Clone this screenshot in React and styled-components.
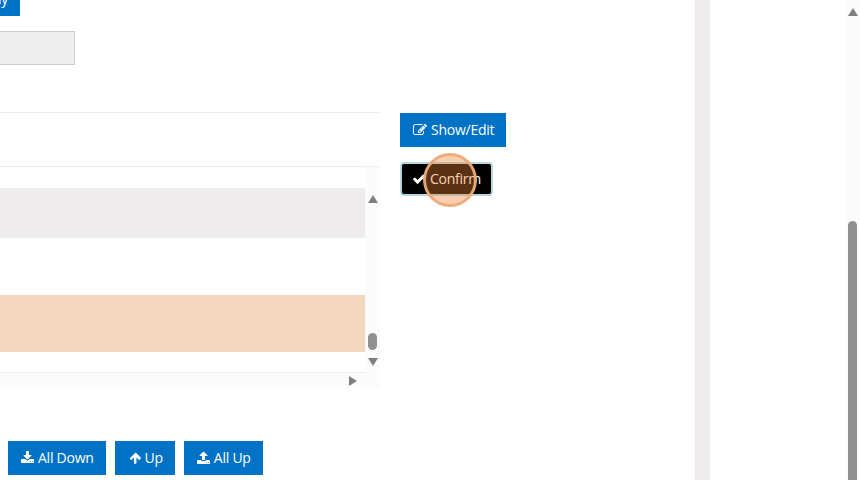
import React from 'react';
import styled, { createGlobalStyle } from 'styled-components';

const Global = createGlobalStyle`
  html, body { margin: 0; padding: 0; background: #fff; overflow: hidden; }
  * { box-sizing: border-box; }
`;
const Page = styled.div`
  width: 860px; height: 480px; display: flex; overflow: hidden; position: relative;
  font-family: "Open Sans", "Liberation Sans", sans-serif; font-size: 14px; background: #fff;
`;
const Main = styled.main`
  width: 695px; height: 480px; flex: none; display: flex; flex-direction: column; overflow: hidden;
`;
const Gutter = styled.div`width: 15px; flex: none; background: #eeeced;`;
const Side = styled.aside`flex: 1; background: #fff;`;
const PageScroll = styled.div`
  width: 15px; flex: none; background: #fbfbfb; position: relative;
`;
const Button = styled.button`
  height: 34px; padding: 0 12px 0 13px; border: 0; border-radius: 0; background: #0072c6; color: #fff;
  font: 14px/20px "Open Sans", "Liberation Sans", sans-serif; letter-spacing: -0.25px;
  display: inline-flex; align-items: center; gap: 4px;
  flex: none; white-space: nowrap;
  svg { flex: none; }
`;
const ApplyButton = styled(Button)`
  align-self: flex-start; width: 70px; margin: -18px 0 0 -50px; justify-content: flex-end; overflow: hidden;
`;
const Field = styled.div`
  width: 175px; height: 34px; margin: 15px 0 0 -100px; background: #eee; border: 1px solid #ccc;
`;
const Panel = styled.section`
  display: flex; margin-top: 47px; align-items: flex-start;
`;
const TableBox = styled.div`width: 380px; flex: none; display: flex; flex-direction: column;`;
const Head = styled.div`
  height: 55px; border-top: 1px solid #eee; border-bottom: 1px solid #eeeeee;
`;
const ScrollRow = styled.div`
  display: flex; height: 206px;
`;
const Body = styled.div`
  width: 365px; flex: none; padding-top: 21px; border-bottom: 1px solid #eee;
  height: 206px;
`;
const Row = styled.div`
  height: ${p => p.$h}px; background: ${p => p.$bg};
`;
const VBar = styled.div`
  width: 15px; flex: none; background: #fbfbfb; position: relative;
`;
const Thumb = styled.div`
  position: absolute; left: 3px; width: 9px; border-radius: 4.5px; background: #8f8f8f;
  top: ${p => p.$top}px; height: ${p => p.$h}px;
`;
const Arrow = styled.div`
  position: absolute; width: 0; height: 0;
  left: ${p => p.$left}px; top: ${p => p.$top}px;
  border-left: 5px solid transparent; border-right: 5px solid transparent;
  ${p => p.$down ? 'border-top: 8px solid #7f7f7f;' : 'border-bottom: 8px solid #7f7f7f;'}
`;
const HBar = styled.div`
  height: 15px; background: #fbfbfb; position: relative;
`;
const RightArrow = styled.div`
  position: absolute; left: 349px; top: 3px; width: 0; height: 0;
  border-top: 5px solid transparent; border-bottom: 5px solid transparent; border-left: 8px solid #7f7f7f;
`;
const Actions = styled.div`
  padding: 1px 0 0 20px; display: flex; flex-direction: column; align-items: flex-start; gap: 15px;
`;
const ConfirmButton = styled(Button)`
  background: #000; border: 2px solid #b5d8e0; border-radius: 4px; padding: 0 10px 0 10px; position: relative;
`;
const Pulse = styled.span`
  position: absolute; left: 21px; top: -11px; width: 54px; height: 54px; border-radius: 50%;
  background: rgba(240, 130, 50, .38); border: 3px solid rgba(238, 170, 120, .95);
  pointer-events: none;
`;
const Transfer = styled.div`
  display: flex; gap: 9px; margin: 53px 0 0 8px;
`;

const Ico = styled.svg`width: ${p => p.$w || 14}px; height: 14px; fill: currentColor;`;
const EditIcon = () => (
  <Ico viewBox="0 0 1792 1792" $w={14}><path d="M888 1184l116-116-152-152-116 116v56h96v96h56zm440-720q-16-16-33 1l-350 350q-17 17-1 33t33-1l350-350q17-17 1-33zm80 594v190q0 119-84.500 203.500t-203.500 84.500h-832q-119 0-203.500-84.500t-84.500-203.500v-832q0-119 84.500-203.500t203.500-84.500h832q63 0 117 25 15 7 18 23 3 17-9 29l-49 49q-14 14-32 8-23-6-45-6h-832q-66 0-113 47t-47 113v832q0 66 47 113t113 47h832q66 0 113-47t47-113v-126q0-13 9-22l64-64q15-15 35-7t20 29zm-96-738l288 288-672 672h-288v-288zm444 132l-92 92-288-288 92-92q28-28 68-28t68 28l152 152q28 28 28 68t-28 68z"/></Ico>
);
const CheckIcon = () => (
  <Ico viewBox="0 0 1792 1792"><path d="M1671 566q0 40-28 68l-724 724-136 136q-28 28-68 28t-68-28l-136-136-362-362q-28-28-28-68t28-68l136-136q28-28 68-28t68 28l294 295 656-657q28-28 68-28t68 28l136 136q28 28 28 68z"/></Ico>
);
const DownloadIcon = () => (
  <Ico viewBox="0 0 1664 1792" $w={13}><path d="M1280 1344q0-26-19-45t-45-19-45 19-19 45 19 45 45 19 45-19 19-45zm256 0q0-26-19-45t-45-19-45 19-19 45 19 45 45 19 45-19 19-45zm128-224v320q0 40-28 68t-68 28h-1472q-40 0-68-28t-28-68v-320q0-40 28-68t68-28h465l135 136q58 56 136 56t136-56l136-136h464q40 0 68 28t28 68zm-325-569q17 41-14 70l-448 448q-18 19-45 19t-45-19l-448-448q-31-29-14-70 17-39 59-39h256v-448q0-26 19-45t45-19h256q26 0 45 19t19 45v448h256q42 0 59 39z"/></Ico>
);
const ArrowUpIcon = () => (
  <Ico viewBox="0 0 1664 1792" $w={13}><path d="M1611 971q0 39-27 66l-75 75q-28 28-68 28-41 0-67-28l-294-293v704q0 40-28 68t-68 28h-128q-40 0-68-28t-28-68v-704l-294 293q-26 28-67 28t-67-28l-75-75q-28-28-28-66 0-39 28-67l651-652q27-27 67-27 39 0 68 27l651 652q28 28 28 67z"/></Ico>
);
const UploadIcon = () => (
  <Ico viewBox="0 0 1664 1792" $w={13}><path d="M1280 1472q0-26-19-45t-45-19-45 19-19 45 19 45 45 19 45-19 19-45zm256 0q0-26-19-45t-45-19-45 19-19 45 19 45 45 19 45-19 19-45zm128-224v320q0 40-28 68t-68 28h-1472q-40 0-68-28t-28-68v-320q0-40 28-68t68-28h427q21 56 70.500 92t110.500 36h256q61 0 110.500-36t70.500-92h427q40 0 68 28t28 68zm-325-648q-17 40-59 40h-256v448q0 26-19 45t-45 19h-256q-26 0-45-19t-19-45v-448h-256q-42 0-59-40-17-39 14-69l448-448q18-19 45-19t45 19l448 448q31 30 14 69z"/></Ico>
);

export default function App() {
  return (
    <Page>
      <Global />
      <Main>
        <ApplyButton>Apply</ApplyButton>
        <Field />
        <Panel>
          <TableBox>
            <Head />
            <ScrollRow>
              <Body>
                <Row $h={50} $bg="#eeeced" />
                <Row $h={57} $bg="#fff" />
                <Row $h={57} $bg="#f3d6be" />
              </Body>
              <VBar>
                <Arrow $left={3} $top={28} />
                <Thumb $top={166} $h={17} />
                <Arrow $left={3} $top={191} $down />
              </VBar>
            </ScrollRow>
            <HBar><RightArrow /></HBar>
          </TableBox>
          <Actions>
            <Button><EditIcon />Show/Edit</Button>
            <ConfirmButton>
              <CheckIcon />Confirm
              <Pulse />
            </ConfirmButton>
          </Actions>
        </Panel>
        <Transfer>
          <Button><DownloadIcon />All Down</Button>
          <Button><ArrowUpIcon />Up</Button>
          <Button><UploadIcon />All Up</Button>
        </Transfer>
      </Main>
      <Gutter />
      <Side />
      <PageScroll>
        <Arrow $left={3} $top={8} />
        <Thumb $top={221} $h={270} />
      </PageScroll>
    </Page>
  );
}
